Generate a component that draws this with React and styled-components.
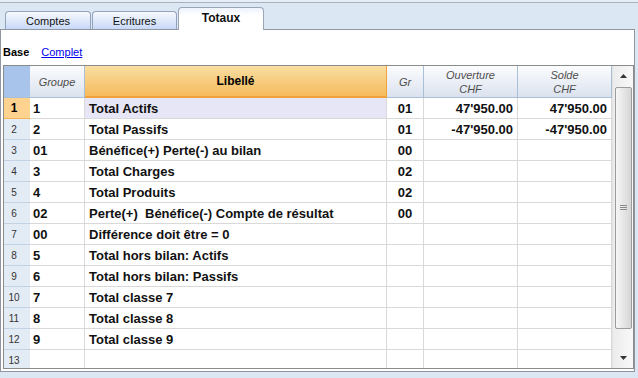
import styled, { createGlobalStyle, css } from "styled-components";

const GlobalStyle = createGlobalStyle`
  html, body {
    margin: 0;
    padding: 0;
    background: #dce7f4;
  }
  * {
    box-sizing: border-box;
  }
`;

const COLS = "26px 55px 302px 37px 94px 94px";

const Page = styled.div`
  width: 638px;
  height: 378px;
  overflow: hidden;
  background: #dce7f4;
  font-family: "Liberation Sans", Arial, sans-serif;
`;

const TopStrip = styled.div`
  height: 3px;
  background: #e8eef7;
  border-bottom: 1px solid #a9b1bc;
`;

const TabBar = styled.div`
  display: flex;
  align-items: flex-end;
  gap: 1px;
  height: 26px;
  padding-left: 5px;
`;

const Tab = styled.div`
  width: ${(p) => p.$width}px;
  height: 18px;
  display: flex;
  align-items: center;
  justify-content: center;
  font-size: 11px;
  color: #111;
  border: 1px solid #93a3bb;
  border-bottom: none;
  border-radius: 4px 4px 0 0;
  background: linear-gradient(#f7f9fe, #c8d9f7);

  ${(p) =>
    p.$active &&
    css`
      height: 23px;
      margin-bottom: -1px;
      padding-bottom: 2px;
      position: relative;
      z-index: 1;
      font-weight: bold;
      font-size: 12px;
      background: linear-gradient(#eef3fd, #ffffff 35%);
      border-color: #9aa6b6;
    `}
`;

const Panel = styled.div`
  height: 343px;
  margin-right: 3px;
  background: #fff;
  border: 1px solid #8f969f;
`;

const FilterBar = styled.div`
  display: flex;
  gap: 12px;
  height: 35px;
  padding: 14px 0 0 2px;
  font-size: 11px;
  line-height: 16px;
`;

const FilterActive = styled.span`
  font-weight: bold;
  color: #000;
`;

const FilterLink = styled.a`
  color: #0000ee;
  text-decoration: underline;
`;

const Grid = styled.div`
  display: flex;
  width: 631px;
  height: 304px;
  margin-left: 2px;
  border: 1px solid #8b8b8b;
`;

const Table = styled.div`
  width: 608px;
  overflow: hidden;
`;

const Row = styled.div`
  display: grid;
  grid-template-columns: ${COLS};
  height: ${(p) => (p.$header ? 32 : 21)}px;
`;

const HeadCell = styled.div`
  display: flex;
  flex-direction: column;
  align-items: center;
  justify-content: center;
  font-size: 11px;
  font-style: italic;
  line-height: 14px;
  color: #4d4d4d;
  background: linear-gradient(#fbfcfe, #dbe2ee);
  border-right: 1px solid #a9bfd6;
  border-bottom: 1px solid #a9bfd6;
`;

const CornerCell = styled.div`
  background: #a9c4ea;
  border-bottom: 1px solid #a9bfd6;
`;

const ActiveHeadCell = styled(HeadCell)`
  font-style: normal;
  font-weight: bold;
  font-size: 12px;
  color: #000;
  background: linear-gradient(#f8dea2, #f6bb5c);
  border-right-color: #f2a23a;
  border-bottom: 2px solid #f2a23a;
`;

const NumCell = styled.div`
  display: flex;
  align-items: center;
  justify-content: center;
  padding-right: 6px;
  font-size: 10px;
  color: #333;
  background: ${(p) => (p.$selected ? "#fdd38f" : "#e3ebf5")};
  border-bottom: 1px solid ${(p) => (p.$selected ? "#f3b45a" : "#c2d3e6")};
  ${(p) =>
    p.$selected &&
    css`
      font-weight: bold;
      font-size: 12px;
      color: #000;
    `}
`;

const Cell = styled.div`
  display: flex;
  align-items: center;
  justify-content: ${(p) =>
    p.$align === "right" ? "flex-end" : p.$align === "center" ? "center" : "flex-start"};
  padding: 0 ${(p) => p.$pad ?? 4}px;
  font-size: 13px;
  font-weight: bold;
  color: #111;
  white-space: pre;
  overflow: hidden;
  background: ${(p) => (p.$selected ? "#e6e6f6" : "#fff")};
  border-right: 1px solid #d9d9d9;
  border-bottom: 1px solid #d9d9d9;
`;

const Scrollbar = styled.div`
  display: flex;
  flex-direction: column;
  width: 21px;
  background: linear-gradient(90deg, #ececec, #f8f8f8);
  border-left: 1px solid #e2e2e2;
`;

const ArrowButton = styled.div`
  display: flex;
  align-items: center;
  justify-content: center;
  height: 20px;
`;

const Thumb = styled.div`
  display: flex;
  align-items: center;
  justify-content: center;
  height: 242px;
  margin: 1px 1px 0 2px;
  border: 1px solid #9c9c9c;
  border-radius: 2px;
  background: linear-gradient(90deg, #f6f6f6, #d6d6d6);
`;

const Track = styled.div`
  flex: 1;
`;

const Arrow = ({ down }) => (
  <svg width="7" height="4" viewBox="0 0 7 4">
    <polygon points={down ? "0,0 7,0 3.5,4" : "0,4 7,4 3.5,0"} fill="#333" />
  </svg>
);

const Grip = () => (
  <svg width="7" height="6" viewBox="0 0 7 6">
    <path d="M0 0.5h7M0 2.5h7M0 4.5h7" stroke="#8a8a8a" strokeWidth="1" />
  </svg>
);

const rows = [
  ["1", "Total Actifs", "01", "47'950.00", "47'950.00"],
  ["2", "Total Passifs", "01", "-47'950.00", "-47'950.00"],
  ["01", "Bénéfice(+) Perte(-) au bilan", "00", "", ""],
  ["3", "Total Charges", "02", "", ""],
  ["4", "Total Produits", "02", "", ""],
  ["02", "Perte(+)  Bénéfice(-) Compte de résultat", "00", "", ""],
  ["00", "Différence doit être = 0", "", "", ""],
  ["5", "Total hors bilan: Actifs", "", "", ""],
  ["6", "Total hors bilan: Passifs", "", "", ""],
  ["7", "Total classe 7", "", "", ""],
  ["8", "Total classe 8", "", "", ""],
  ["9", "Total classe 9", "", "", ""],
  ["", "", "", "", ""],
];

const App = () => {
  return (
    <Page>
      <GlobalStyle />
      <TopStrip />
      <TabBar>
        <Tab $width={86}>Comptes</Tab>
        <Tab $width={85}>Ecritures</Tab>
        <Tab $width={86} $active>
          Totaux
        </Tab>
      </TabBar>
      <Panel>
        <FilterBar>
          <FilterActive>Base</FilterActive>
          <FilterLink>Complet</FilterLink>
        </FilterBar>
        <Grid>
          <Table>
            <Row $header>
              <CornerCell />
              <HeadCell>Groupe</HeadCell>
              <ActiveHeadCell>Libellé</ActiveHeadCell>
              <HeadCell>Gr</HeadCell>
              <HeadCell>
                <span>Ouverture</span>
                <span>CHF</span>
              </HeadCell>
              <HeadCell>
                <span>Solde</span>
                <span>CHF</span>
              </HeadCell>
            </Row>
            {rows.map((r, i) => {
              const selected = i === 0;
              return (
                <Row key={i}>
                  <NumCell $selected={selected}>{i + 1}</NumCell>
                  <Cell $pad={3}>{r[0]}</Cell>
                  <Cell $selected={selected}>{r[1]}</Cell>
                  <Cell $align="center">{r[2]}</Cell>
                  <Cell $align="right">{r[3]}</Cell>
                  <Cell $align="right">{r[4]}</Cell>
                </Row>
              );
            })}
          </Table>
          <Scrollbar>
            <ArrowButton>
              <Arrow />
            </ArrowButton>
            <Thumb>
              <Grip />
            </Thumb>
            <Track />
            <ArrowButton>
              <Arrow down />
            </ArrowButton>
          </Scrollbar>
        </Grid>
      </Panel>
    </Page>
  );
};

export default App;
